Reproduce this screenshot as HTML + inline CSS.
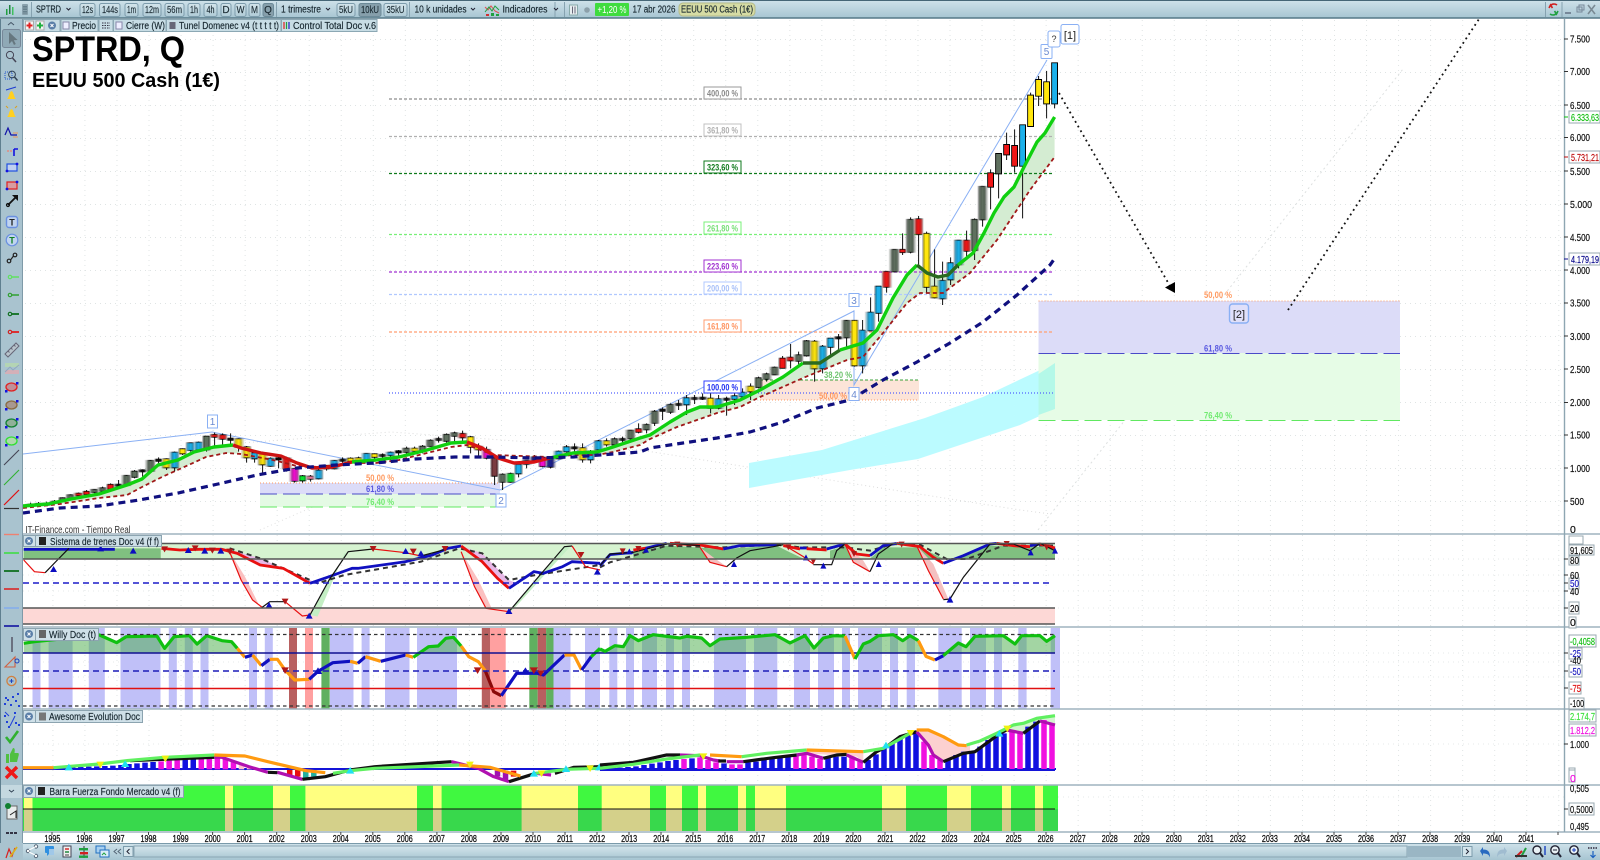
<!DOCTYPE html>
<html lang="es"><head><meta charset="utf-8"><title>SPTRD, Q</title>
<style>
html,body{margin:0;padding:0;background:#fff;width:1600px;height:860px;overflow:hidden}
svg{display:block;font-family:"Liberation Sans",Arial,sans-serif;filter:blur(.3px)}
path,polyline,line{vector-effect:non-scaling-stroke}
path:not(.f),polyline,line{fill:none}
path.f{stroke:none}
.a{font-size:10.5px;fill:#111;stroke:#111;stroke-width:.2}
.y{font-size:10.5px;fill:#111;stroke:#111;stroke-width:.3;text-anchor:middle}
.b{font-size:10px;fill:#1c2c34;stroke:#1c2c34;stroke-width:.15;text-anchor:middle}
.l{font-size:10px;fill:#15252d;stroke:#15252d;stroke-width:.15}
.p{font-size:9.5px;font-weight:bold;text-anchor:middle}
.w{font-size:10px;text-anchor:middle;fill:#6a8ad0}
.btn{fill:url(#bg);stroke:#7d9cac;stroke-width:1}
.tag{fill:#fff;stroke-width:1}
</style></head><body>
<svg width="1600" height="860" viewBox="0 0 1600 860" xmlns="http://www.w3.org/2000/svg">
<defs>
<linearGradient id="tb" x1="0" y1="0" x2="0" y2="1"><stop offset="0" stop-color="#cfe2ea"/><stop offset="1" stop-color="#a7c5d2"/></linearGradient>
<linearGradient id="bg" x1="0" y1="0" x2="0" y2="1"><stop offset="0" stop-color="#d4e5ec"/><stop offset="1" stop-color="#afcbd6"/></linearGradient>
<pattern id="gv" patternUnits="userSpaceOnUse" x="52.4" y="0" width="32.04" height="5"><rect width="1" height="1" fill="#dfe4e4"/></pattern>
<pattern id="gh" patternUnits="userSpaceOnUse" x="20" y="6" width="5" height="33"><rect width="1" height="1" fill="#dfe4e4"/></pattern>
<filter id="o" filterUnits="userSpaceOnUse" x="0" y="0" width="1600" height="860"><feMorphology in="SourceAlpha" operator="dilate" radius="0.9" result="d"/><feMerge><feMergeNode in="d"/><feMergeNode in="SourceGraphic"/></feMerge></filter>
</defs>
<rect width="1600" height="860" fill="#fff"/>
<!-- grid -->
<rect x="23" y="19" width="1541" height="813" fill="url(#gv)"/>
<rect x="23" y="19" width="1541" height="515" fill="url(#gh)"/>
<path d="M23 559H1564M23 575H1564M23 591H1564M23 608H1564M23 653H1564M23 662H1564M23 677H1564M23 744H1564M23 797H1564" stroke="#e4e8e8" stroke-width="1" stroke-dasharray="1 4"/>

<!-- faint lines -->
<path d="M1038 530L1403 69" stroke="#dde0e0" stroke-width="1" stroke-dasharray="2 3"/>
<path d="M241 443L391 432L640 450L1020 510L1051 514" stroke="#dcdcdc" stroke-width="1" stroke-dasharray="1 3"/>
<path d="M260 530L340 495" stroke="#e0e0e0" stroke-width="1" stroke-dasharray="1 3"/>

<!-- retracement zones -->
<rect x="760" y="380" width="159" height="20" fill="#fce4d8"/>
<rect x="260" y="483" width="240" height="11" fill="#dcdcf8"/>
<rect x="260" y="494" width="240" height="13" fill="#e4fae4"/>
<polygon points="749,463 822,450 925,418 983,397 1055,363 1055,409 1020,425 918,459 850,470 749,488" fill="#bbfbff"/>
<rect x="1038.5" y="301" width="361.5" height="52" fill="#dcdcf8"/>
<rect x="1038.5" y="353" width="361.5" height="67" fill="#e6fce6"/>
<polygon points="1038.5,374 1055,363 1055,409 1038.5,415" fill="#b4f8e8"/>
<path d="M1038.5 301H1400" stroke="#ff9a60" stroke-width="1" stroke-dasharray="1 2"/>
<path d="M1038.5 353.5H1400" stroke="#4a4ac8" stroke-width="1" stroke-dasharray="17 6"/>
<path d="M1038.5 420.5H1400" stroke="#60e860" stroke-width="1" stroke-dasharray="17 6"/>
<path d="M260 483H500" stroke="#ff9a60" stroke-width="1" stroke-dasharray="1 2"/>
<path d="M260 494H500" stroke="#4a4ac8" stroke-width="1" stroke-dasharray="17 6"/>
<path d="M260 507H500" stroke="#60e860" stroke-width="1" stroke-dasharray="17 6"/>
<path d="M760 380H919" stroke="#38a038" stroke-width="1" stroke-dasharray="3 2"/>
<path d="M760 400H919" stroke="#ff9a60" stroke-width="1" stroke-dasharray="1 2"/>

<!-- green cloud -->
<g fill="#d4ecd2">
<polygon points="23,506 48,504 71,499 99,494 127,485 142,479 158,465 178,460 194,452 214,447 233,445 241,454 226,453 206,457 182,468 162,477 142,487 127,495 99,498 60,504 23,508"/>
<polygon points="550,458 573,453 597,452 613,447 640,438 650,435 670,422 687,412 700,407 717,407 740,400 760,390 783,377 803,363 820,363 840,350 853,346 863,343 877,330 893,298 907,275 917,265 927,273 938,277 948,275 958,265 973,253 984,233 994,213 1004,197 1014,187 1024,167 1037,142 1045,133 1054.6,117 1054.6,157 1030,190 997,240 970,273 943,293 920,293 907,303 883,333 863,357 847,360 803,378 760,397 740,407 717,413 677,427 650,439 640,445 613,452 597,455 573,455 550,457"/>
</g>

<!-- fib lines -->
<g stroke-width="1.2">
<path d="M389 99H1054" stroke="#8c8c8c" stroke-dasharray="3 2"/>
<path d="M389 136.5H1054" stroke="#b0b0b0" stroke-dasharray="3 2"/>
<path d="M389 173.5H1054" stroke="#0f7a1c" stroke-dasharray="3 2"/>
<path d="M389 234.5H1054" stroke="#78f078" stroke-dasharray="3 2"/>
<path d="M389 272H1054" stroke="#a030d0" stroke-dasharray="3 2"/>
<path d="M389 294.5H1054" stroke="#b0c8ff" stroke-dasharray="3 2"/>
<path d="M389 332H1054" stroke="#ff9e70" stroke-dasharray="3 2"/>
<path d="M389 393H1054" stroke="#5060ff" stroke-dasharray="1 2"/>
</g>

<!-- wave line -->
<polyline points="23,454 212,432 500,490 854,311 854,385 1047,60" stroke="#8ab0f4" stroke-width="1" fill="none"/>

<!-- candles -->
<g stroke-linecap="butt">
<g transform="translate(1054.6 0) scale(-8 .33333)"><path stroke="#111" stroke-width="1" d="M0 190V325M1 213V355M2 228V318M3 278V380M4 375V655M5 388V518M6 398V480M7 460V595M8 508V628"/></g>
<g transform="translate(1054.6 200) scale(-8 .33333)"><path stroke="#111" stroke-width="1" d="M9 -39V80M10 55V180M11 92V180M12 120V205M13 172V255M14 185V315M15 148V295M16 95V280M17 48V195M18 52V160M19 100V165M20 150V216M21 215V278M22 258V365M23 292V392M24 360V520M25 360V500M26 360V440M27 402V450M28 415V465M29 435V520M30 420V545M31 420V470M32 455V500M33 432V505M34 468V505M35 500V525M36 518V545M37 530V565M38 550V600M39 565V590M40 580V615M41 590V647M42 585V628M43 580V640M44 580V600M45 585V612M46 585V645M47 600V630M48 610V642M49 622V660M50 630V678"/></g>
<g transform="translate(1054.6 400) scale(-8 .33333)"><path stroke="#111" stroke-width="1" d="M51 70V100M52 70V100M53 90V118M54 110V135M55 112V140M56 115V140M57 120V150M58 150V190M59 130V188M60 130V155M61 135V158M62 152V178M63 170V205M64 170V202M65 165V190M66 180V205M67 192V232M68 218V248M69 220V270M70 172V255M71 140V178M72 130V175M73 108V160M74 92V130M75 95V125M76 100V128M77 110V128M78 118V140M79 135V160M80 140V160M81 140V165M82 150V175M83 155V180M84 160V180M85 160V178M86 160V185M87 170V190M88 172V190M89 172V188M90 180V208M91 195V212M92 205V238M93 225V245M94 225V248M95 205V248M96 170V215M97 165V205M98 172V200M99 155V218M100 155V188M101 138V188M102 115V155M103 100V135M104 100V140M105 98V140M106 108V155M107 125V152M108 128V155M109 145V165M110 155V215M111 175V210M112 172V195M113 180V218M114 208V232M115 210V235M116 225V258M117 240V262M118 250V270M119 260V275M120 268V280M121 270V285M122 278V288M123 283V298M124 292V306M125 300V312M126 305V318M127 306V318M128 308V320"/></g>
<g filter="url(#o)" stroke-width="4.8">
<g transform="translate(1054.6 0) scale(-8 .33333)">
<path stroke="#1cb0ea" d="M0 190V310M4 376V497"/>
<path stroke="#ffe60a" d="M1 247V310M2 240V287M3 287V378"/>
<path stroke="#f01818" d="M5 438V497M6 435V463M8 520V560"/>
<path stroke="#5f705f" d="M7 462V520"/>
</g>
<g transform="translate(1054.6 200) scale(-8 .33333)">
<path stroke="#5f705f" d="M9 -39V58M10 60V150M18 60V155M20 150V214M26 363V412M31 424V466M32 466V482M35 503V523M36 523V536M37 535V561M48 615V635M50 635V668"/>
<path stroke="#f01818" d="M11 122V152M17 58V102M19 150V156M21 216V260M33 473V481M34 476V503"/>
<path stroke="#1cb0ea" d="M12 122V193M13 190V238M14 243V295M22 260V338M23 338V391M24 392V496M28 416V440M29 440V505M39 578V589M40 589V596M42 598V623M46 595V613"/>
<path stroke="#ffe60a" d="M15 260V292M16 102V260M25 363V496M30 425V505M38 560V574M43 596V623"/>
<path stroke="#111" d="M27 412V415M41 596V599M44 593V596M45 594V597M47 612V615M49 629V632"/>
</g>
<g transform="translate(1054.6 400) scale(-8 .33333)">
<path stroke="#5f705f" d="M51 75V88M53 92V115M55 118V133M69 224V245M75 100V107M76 105V122M78 122V138M79 140V152M81 146V156M91 198V205M106 110V148M113 183V212M115 215V230M116 228V255M119 265V272M120 270V276M123 286V296M124 295V303"/>
<path stroke="#f01818" d="M52 88V95M74 102V112M96 175V205M104 106V116M105 105V110M118 255V266M121 276V282M122 281V286"/>
<path stroke="#ffe60a" d="M56 124V133M59 145V178M72 140V148M73 112V140M80 146V152M85 163V170M87 175V180M88 176V182M99 160V193M101 142V172M102 118V140M109 148V160M111 178V202"/>
<path stroke="#1cb0ea" d="M57 124V148M58 155V178M61 142V154M62 155V175M66 182V192M67 195V220M83 158V165M86 162V182M90 183V205M92 212V235M98 176V197M100 160V175M107 128V148M108 130V150M110 158V202"/>
<path stroke="#1e2090" d="M63 175V200M65 172V180"/>
<path stroke="#f010d0" d="M64 173V198M71 150V173M95 207V242"/>
<path stroke="#10e030" d="M68 222V245M94 229V241"/>
<path stroke="#7a3a40" d="M70 175V227"/>
<path stroke="#f080a0" d="M93 230V236"/>
<path stroke="#111" d="M54 117V120M60 142V145M77 117V120M82 154V157M84 165V168M89 179V182M97 175V178M103 116V119M112 179V182M114 211V214M117 254V257M125 305V308M126 311V314M127 312V315M128 314V317"/>
</g>
</g>
</g>

<!-- moving averages -->
<polyline points="23,508 60,504 99,498 127,495 142,487 162,477 182,468 206,457 226,453 241,454 257,457 273,460 297,466 320,467 348,463 376,463 399,460 427,453 451,447 467,445 494,455 550,457 573,455 597,455 613,452 640,445 650,439 677,427 717,413 740,407 760,397 803,378 847,360 863,357 883,333 907,303 920,293 943,293 970,273 997,240 1030,190 1054.6,157" fill="none" stroke="#a01818" stroke-width="1.8" stroke-dasharray="4 3"/>
<g fill="none" stroke-width="3.4" stroke-linejoin="round">
<polyline stroke="#10d010" points="23,506 48,504 71,499 99,494 127,485 142,479 158,465 178,460 194,452 214,447 233,445"/>
<polyline stroke="#cc1414" points="233,445 241,448 261,453 281,456 297,463 312,468 332,467 352,462"/>
<polyline stroke="#10d010" points="352,462 376,460 399,457 427,450 451,443 467,442"/>
<polyline stroke="#d81414" points="467,442 482,448 498,458 514,463 534,462 550,458"/>
<polyline stroke="#10d010" points="550,458 573,453 597,452 613,447 640,438 650,435 670,422 687,412 700,407 717,407 740,400 760,390 783,377 803,363"/>
<polyline stroke="#2a6a20" points="803,363 820,363 840,350"/>
<polyline stroke="#10d010" points="840,350 853,346 863,343 877,330 893,298 907,275 917,265"/>
<polyline stroke="#2a6a20" points="917,265 927,273 938,277 948,275 958,265"/>
<polyline stroke="#10d010" points="958,265 973,253 984,233 994,213 1004,197 1014,187 1024,167 1037,142 1045,133 1054.6,117"/>
</g>
<polyline points="23,513 60,508 99,506 139,500 178,493 218,484 257,475 297,468 336,465 376,463 415,459 455,457 494,457 534,458 573,457 640,452 650,448 683,443 717,438 750,432 783,422 817,408 850,400 883,380 917,362 950,343 983,322 1017,295 1050,265 1055,258" fill="none" stroke="#10107f" stroke-width="3.2" stroke-dasharray="7 5"/>

<!-- projections -->
<path d="M1059 93L1170 286" stroke="#111" stroke-width="1.8" stroke-dasharray="1.8 3.6"/>
<path class="f" fill="#000" d="M1165 287.5L1175 282V293Z"/>
<path d="M1288 310L1479 19" stroke="#111" stroke-width="1.8" stroke-dasharray="1.8 3.6"/>

<!-- retracement labels -->
<g><text class="p" x="1218" y="298" textLength="28" lengthAdjust="spacingAndGlyphs" fill="#ff9a60">50,00 %</text>
<text class="p" x="1218" y="351.5" textLength="28" lengthAdjust="spacingAndGlyphs" fill="#5a5ae0">61,80 %</text>
<text class="p" x="1218" y="418.5" textLength="28" lengthAdjust="spacingAndGlyphs" fill="#70ea70">76,40 %</text>
<text class="p" x="380" y="481" textLength="28" lengthAdjust="spacingAndGlyphs" fill="#ff9a60">50,00 %</text>
<text class="p" x="380" y="492" textLength="28" lengthAdjust="spacingAndGlyphs" fill="#5a5ae0">61,80 %</text>
<text class="p" x="380" y="505" textLength="28" lengthAdjust="spacingAndGlyphs" fill="#70ea70">76,40 %</text>
<text class="p" x="838" y="378" textLength="28" lengthAdjust="spacingAndGlyphs" fill="#70c470">38,20 %</text>
<text class="p" x="833" y="399" textLength="28" lengthAdjust="spacingAndGlyphs" fill="#ff9a60">50,00 %</text></g>

<!-- fib labels -->
<g>
<rect class="tag" x="704" y="87" width="37" height="12" stroke="#9a9a9a"/><text class="p" x="722.5" y="96.5" textLength="31" lengthAdjust="spacingAndGlyphs" fill="#8a8a8a">400,00 %</text>
<rect class="tag" x="704" y="124" width="37" height="12" stroke="#c0c0c0"/><text class="p" x="722.5" y="133.5" textLength="31" lengthAdjust="spacingAndGlyphs" fill="#b0b0b0">361,80 %</text>
<rect class="tag" x="704" y="161" width="37" height="12" stroke="#0f7a1c"/><text class="p" x="722.5" y="170.5" textLength="31" lengthAdjust="spacingAndGlyphs" fill="#0f7a1c">323,60 %</text>
<rect class="tag" x="704" y="222" width="37" height="12" stroke="#78f078"/><text class="p" x="722.5" y="231.5" textLength="31" lengthAdjust="spacingAndGlyphs" fill="#78e078">261,80 %</text>
<rect class="tag" x="704" y="260" width="37" height="12" stroke="#a030d0"/><text class="p" x="722.5" y="269.5" textLength="31" lengthAdjust="spacingAndGlyphs" fill="#a030d0">223,60 %</text>
<rect class="tag" x="704" y="282" width="37" height="12" stroke="#b0c8ff"/><text class="p" x="722.5" y="291.5" textLength="31" lengthAdjust="spacingAndGlyphs" fill="#a8c0f8">200,00 %</text>
<rect class="tag" x="704" y="320" width="37" height="12" stroke="#ff9e70"/><text class="p" x="722.5" y="329.5" textLength="31" lengthAdjust="spacingAndGlyphs" fill="#ff9460">161,80 %</text>
<rect class="tag" x="704" y="381" width="37" height="12" stroke="#3040ff"/><text class="p" x="722.5" y="390.5" textLength="31" lengthAdjust="spacingAndGlyphs" fill="#2030f0">100,00 %</text>
</g>

<!-- wave tags -->
<g stroke="#8ab0f4" fill="#fff" stroke-width="1">
<rect x="207.5" y="415" width="10" height="13"/><rect x="496" y="494" width="10" height="13"/><rect x="849" y="293.5" width="10" height="13"/><rect x="849" y="387.5" width="10" height="13"/><rect x="1041" y="44.5" width="11" height="14" rx="1"/><rect x="1048" y="31" width="12" height="16" rx="2"/><rect x="1061" y="24.5" width="18" height="19.5" rx="2"/><rect x="1229.5" y="304" width="19" height="19" rx="3" fill="#e0e0fa" stroke-width="1.4"/>
</g>
<text class="w" x="212.5" y="425">1</text><text class="w" x="501" y="504">2</text><text class="w" x="854" y="304">3</text><text class="w" x="854" y="398">4</text><text class="w" x="1046.5" y="55">5</text>
<text x="1054" y="42" font-size="9" text-anchor="middle" fill="#333">?</text>
<text x="1070" y="39" font-size="11" text-anchor="middle" fill="#222">[1]</text>
<text x="1239" y="318" font-size="11" text-anchor="middle" fill="#222">[2]</text>

<!-- titles -->
<text x="32" y="61" font-size="35" font-weight="bold" fill="#000" textLength="153" lengthAdjust="spacingAndGlyphs">SPTRD, Q</text>
<text x="32" y="87" font-size="20" font-weight="bold" fill="#000" textLength="188" lengthAdjust="spacingAndGlyphs">EEUU 500 Cash (1€)</text>
<text x="25.5" y="533" font-size="10" fill="#333" textLength="105" lengthAdjust="spacingAndGlyphs">IT-Finance.com - Tiempo Real</text>

<!-- PANEL Sistema -->
<rect x="23" y="543" width="1032" height="16" fill="#d6f3d0"/>
<rect x="23" y="608" width="1032" height="16" fill="#fdd8d6"/>
<g transform="translate(0 520) scale(.38268 .33333)">
<path class="f" fill="#80c080" d="M62 85H420V116H62Z"/>
<path class="f" fill="#e8b8e8" d="M610 92L680 115 740 145 830 190 810 190 740 145 680 135ZM1205 78L1260 100 1330 180 1350 190 1330 205 1300 175 1260 125Z"/>
<path class="f" fill="#fbc0c0" d="M600 95L640 170 680 262 690 262 660 240 630 180ZM1205 95L1240 200 1270 265 1285 265 1250 180Z"/>
<path class="f" fill="#c4eec4" d="M810 285L830 290 900 100 910 95 860 180ZM1330 275L1340 270 1490 80 1475 80 1400 180Z"/>
<polyline points="600,85 680,115 740,145 830,190 900,165 1000,145 1100,125 1200,85 1260,100 1330,180 1400,165 1568,135" fill="none" stroke="#333" stroke-width="2" stroke-dasharray="5 4"/>
<g fill="none" stroke-width="2.8" stroke-linejoin="round">
<polyline stroke="#e81010" points="422,85 470,90 520,88 580,88 620,100 680,135 740,145 810,190"/>
<polyline stroke="#1010c0" points="810,190 860,170 920,145 935,145 1060,125 1130,105 1170,85 1205,78"/>
<polyline stroke="#e81010" points="1205,78 1260,125 1300,175 1330,205"/>
<polyline stroke="#1010c0" points="1330,205 1395,155 1420,160 1470,140 1495,125 1568,130"/>
<polyline stroke="#1010c0" points="62,88 300,88"/>
</g>
<g fill="none" stroke-width="1.2">
<polyline stroke="#e81010" points="62,120 90,155 118,158"/>
<polyline stroke="#111" points="118,158 150,120 180,85"/>
<polyline stroke="#e81010" points="598,90 630,180 660,240 685,262"/>
<polyline stroke="#111" points="685,262 705,245 745,245"/>
<polyline stroke="#e81010" points="745,245 790,288 810,285"/>
<polyline stroke="#111" points="810,285 860,180 910,95 975,87"/>
<polyline stroke="#e81010" points="975,87 1060,98 1100,108"/>
<polyline stroke="#111" points="1100,108 1165,88"/>
<polyline stroke="#e81010" points="1205,95 1240,200 1270,265 1330,275"/>
<polyline stroke="#111" points="1330,275 1400,180 1475,80 1495,78"/>
<polyline stroke="#e81010" points="1495,78 1530,140 1568,150"/>
</g>
<path class="f" fill="#0c0cc0" d="M131 156l9-18 9 18zM254 94l9-18 9 18zM339 101l9-18 9 18zM483 99l9-18 9 18zM526 101l9-18 9 18zM568 101l9-18 9 18zM694 264l9-18 9 18zM799 296l9-18 9 18zM1051 102l9-18 9 18zM1091 109l9-18 9 18zM1321 282l9-18 9 18zM1552 164l9-18 9 18z"/>
<path class="f" fill="#b01818" d="M421 79h18l-9 18zM501 76h18l-9 18zM546 83h18l-9 18zM591 86h18l-9 18zM736 236h18l-9 18zM966 78h18l-9 18zM1071 86h18l-9 18zM1154 78h18l-9 18zM1509 96h18l-9 18z"/>
</g>
<g transform="translate(600 534) scale(.33333)">
<path class="f" fill="#80c080" d="M100 74V55L200 35 370 45 530 35 570 55 610 74ZM690 74V50L740 35 760 74ZM810 74L850 40 960 40 1030 74ZM1060 74L1170 35 1365 40V74Z"/>
<path class="f" fill="#f4c0c0" d="M300 40L330 85 380 98 340 70ZM735 30L760 85 810 113 790 80ZM950 35L985 110 1030 195 1045 195 1000 90Z"/>
<polyline points="0,100 30,85 100,65 200,35 370,40 530,32 600,40 735,40 810,50 880,30 960,32 1040,75 1100,75 1170,50 1210,35 1365,35" fill="none" stroke="#333" stroke-width="2" stroke-dasharray="5 4"/>
<g fill="none" stroke-width="2.8" stroke-linejoin="round">
<polyline stroke="#1010c0" points="0,95 30,62 100,55"/>
<polyline stroke="#e81010" points="100,48 140,42"/>
<polyline stroke="#1010c0" points="140,42 200,28"/>
<polyline stroke="#e81010" points="210,28 300,33 370,45"/>
<polyline stroke="#1010c0" points="370,45 420,35 530,32"/>
<polyline stroke="#e81010" points="550,35 600,45"/>
<polyline stroke="#1010c0" points="600,42 620,42"/>
<polyline stroke="#e81010" points="620,44 680,48"/>
<polyline stroke="#1010c0" points="680,45 735,30"/>
<polyline stroke="#e81010" points="735,30 770,60 810,65"/>
<polyline stroke="#1010c0" points="810,65 850,35 890,28"/>
<polyline stroke="#e81010" points="890,28 960,38 1000,70 1030,88"/>
<polyline stroke="#1010c0" points="1030,88 1090,65 1170,30 1190,28"/>
<polyline stroke="#e81010" points="1190,28 1240,35 1290,38"/>
<polyline stroke="#1010c0" points="1290,35 1320,30"/>
<polyline stroke="#e81010" points="1320,30 1365,42"/>
</g>
<g fill="none" stroke-width="1.2">
<polyline stroke="#111" points="0,95 30,60 100,55 200,30 240,30 300,35"/>
<polyline stroke="#e81010" points="300,40 330,85 380,98"/>
<polyline stroke="#111" points="380,98 410,72 450,50 520,38 550,32"/>
<polyline stroke="#e81010" points="550,32 610,68 640,90"/>
<polyline stroke="#111" points="640,92 695,92 710,50 735,30"/>
<polyline stroke="#e81010" points="735,30 760,85 810,113"/>
<polyline stroke="#111" points="810,113 835,60 880,28"/>
<polyline stroke="#e81010" points="950,35 985,110 1030,195"/>
<polyline stroke="#111" points="1030,197 1050,195 1090,130 1170,30 1240,30 1290,50 1320,28 1365,50"/>
</g>
<path class="f" fill="#0c0cc0" d="M79 61l9-18 9 18zM129 56l9-18 9 18zM393 99l9-18 9 18zM609 79l9-18 9 18zM661 104l9-18 9 18zM827 99l9-18 9 18zM1040 206l10-20 10 20zM1283 64l9-18 9 18zM1356 59l9-18 9 18z"/>
<path class="f" fill="#b01818" d="M59 43h18l-9 18zM106 36h18l-9 18zM223 23h18l-9 18zM896 23h18l-9 18zM1211 21h18l-9 18zM556 31h18l-9 18zM631 73h18l-9 18zM753 51h18l-9 18zM1331 31h18l-9 18z"/>
</g>
<path d="M23 543.5H1055M23 559H1055M23 608H1055M23 624H1055" stroke="#555" stroke-width="1.4"/>
<path d="M23 583H1052" stroke="#1c1cc8" stroke-width="1.5" stroke-dasharray="6 4"/>

<!-- PANEL Willy -->
<g fill="#c0c0f8">
<rect x="32.5" y="628" width="8" height="81"/><rect x="48.6" y="628" width="24" height="81"/><rect x="88.8" y="628" width="16" height="81"/><rect x="120.5" y="628" width="40" height="81"/><rect x="168.8" y="628" width="8" height="81"/><rect x="184.8" y="628" width="8" height="81"/><rect x="200.5" y="628" width="8" height="81"/><rect x="249" y="628" width="8" height="81"/><rect x="264.8" y="628" width="8" height="81"/><rect x="330" y="628" width="23.5" height="81"/><rect x="361.6" y="628" width="8" height="81"/><rect x="385" y="628" width="24.5" height="81"/><rect x="417" y="628" width="40" height="81"/><rect x="553.5" y="628" width="17" height="81"/><rect x="585" y="628" width="15" height="81"/>
<rect x="609.3" y="628" width="8" height="81"/><rect x="626" y="628" width="8" height="81"/><rect x="642" y="628" width="15" height="81"/><rect x="666" y="628" width="8" height="81"/><rect x="682" y="628" width="8" height="81"/><rect x="714" y="628" width="32" height="81"/><rect x="754" y="628" width="23.3" height="81"/><rect x="794" y="628" width="16" height="81"/><rect x="818" y="628" width="16" height="81"/><rect x="842" y="628" width="8" height="81"/><rect x="858" y="628" width="24" height="81"/><rect x="890" y="628" width="8" height="81"/><rect x="906.7" y="628" width="8.3" height="81"/><rect x="938.3" y="628" width="23.4" height="81"/><rect x="970" y="628" width="16" height="81"/><rect x="994" y="628" width="8" height="81"/><rect x="1018.3" y="628" width="8.3" height="81"/><rect x="1050.7" y="628" width="9.3" height="81"/>
</g>
<rect x="289" y="628" width="8" height="81" fill="#b86060"/><rect x="305" y="628" width="8" height="81" fill="#ffa0a0"/><rect x="321.4" y="628" width="8.3" height="81" fill="#60b060"/>
<rect x="481.8" y="628" width="8.2" height="81" fill="#b86060"/><rect x="490" y="628" width="15.7" height="81" fill="#ffa0a0"/><rect x="529.3" y="628" width="8.4" height="81" fill="#60b060"/><rect x="537.7" y="628" width="8.4" height="81" fill="#b86060"/><rect x="546.1" y="628" width="7.4" height="81" fill="#60b060"/>
<g transform="translate(0 520) scale(.38268 .33333)">
<path class="f" fill="#48ac48" fill-opacity=".5" d="M62 370L90 365 260 345 305 368 330 350 410 348 430 385 455 350 495 347 515 372 540 347 580 362 605 365 620 385 632 400H62ZM1085 400L1120 380 1145 378 1165 355 1185 352 1205 378 1220 400ZM1545 410L1568 385V400H1555Z"/>
<g fill="none" stroke-width="3.2" stroke-linejoin="round">
<polyline stroke="#10c010" points="62,370 90,365 260,345 305,368 330,350 410,348 430,385 455,350 495,347 515,372 540,347 580,362 605,365 620,385"/>
<polyline stroke="#ff9a10" points="620,385 640,412"/>
<polyline stroke="#1010c0" points="640,412 660,405"/>
<polyline stroke="#ff9a10" points="660,405 683,437"/>
<polyline stroke="#1010c0" points="683,437 705,418"/>
<polyline stroke="#ff9a10" points="705,418 725,418 745,450 770,480 808,478"/>
<polyline stroke="#1010c0" points="808,478 830,455 870,428 915,424"/>
<polyline stroke="#ff9a10" points="915,424 935,430"/>
<polyline stroke="#1010c0" points="935,430 955,410"/>
<polyline stroke="#ff9a10" points="955,410 995,424"/>
<polyline stroke="#1010c0" points="995,424 1060,405"/>
<polyline stroke="#ff9a10" points="1060,405 1080,412"/>
<polyline stroke="#10c010" points="1080,412 1120,380 1145,378 1165,355 1185,352 1205,378"/>
<polyline stroke="#ff9a10" points="1205,378 1225,410 1250,425 1268,452"/>
<polyline stroke="#8a0a0a" points="1268,452 1290,515 1310,527"/>
<polyline stroke="#1010c0" points="1310,527 1350,460 1405,460 1420,465 1475,405"/>
<polyline stroke="#ff9a10" points="1475,405 1500,405 1520,450"/>
<polyline stroke="#1010c0" points="1520,450 1545,410"/>
<polyline stroke="#10c010" points="1545,410 1568,385"/>
</g>
</g>
<g transform="translate(600 534) scale(.33333)">
<path class="f" fill="#48ac48" fill-opacity=".5" d="M0 345L15 352 45 335 70 338 90 305 115 320 160 302 240 312 260 307 305 312 330 335 360 315 440 310 525 302 570 327 615 305 642 342 670 312 700 305 735 306 755 357H0ZM772 357L790 330 810 322 835 305 880 302 908 320 930 305 955 320 972 357ZM1040 357L1075 327 1098 338 1125 307 1210 305 1245 330 1265 305 1320 305 1340 322 1365 305V357Z"/>
</g>
<path d="M23 634.5H1055M23 706H1055" stroke="#333" stroke-width="1.2" stroke-dasharray="3.5 3"/>
<path d="M23 653H1055" stroke="#101090" stroke-width="1.5"/>
<path d="M23 671H1055" stroke="#1c1cb8" stroke-width="1.5" stroke-dasharray="6 4"/>
<path d="M23 688.5H1055" stroke="#e01010" stroke-width="1.4"/>
<g transform="translate(600 534) scale(.33333)"><g fill="none" stroke-width="3.2" stroke-linejoin="round">
<polyline stroke="#10c010" points="0,345 15,352 45,335 70,338 90,305 115,320 160,302 240,312 260,307 305,312 330,335 360,315 440,310 525,302 570,327 615,305 642,342 670,312 700,305 735,306"/>
<polyline stroke="#ff9a10" points="735,306 765,375"/>
<polyline stroke="#10c010" points="765,375 790,330 810,322 835,305 880,302 908,320 930,305 955,320"/>
<polyline stroke="#ff9a10" points="955,320 978,367 1005,378"/>
<polyline stroke="#1010c0" points="1005,378 1030,365"/>
<polyline stroke="#10c010" points="1030,365 1075,327 1098,338 1125,307 1210,305 1245,330 1265,305 1320,305 1340,322 1365,305"/>
</g></g>
<g transform="translate(0 520) scale(.38268 .33333)">
<path class="f" fill="#1010c0" d="M820 462l11-20 11 20zM1362 462l11-20 11 20z"/>
<path class="f" fill="#b01818" d="M735 442h20l-10 20zM1238 442h20l-10 20zM1384 442h22l-11 20zM1404 452h18l-9 18z"/>
</g>

<!-- PANEL Awesome -->
<path d="M23 769H1056" stroke="#1414d8" stroke-width="2"/>
<g transform="translate(0 520) scale(.38268 .33333)">
<g stroke-width="5.5" fill="none">
<path stroke="#1010e0" d="M190 748V742M211 748V741M232 748V740M253 748V739M274 748V738M295 748V737M316 748V735M337 748V732M358 748V730M379 748V728M400 748V726M484 748V718M505 748V716"/>
<path stroke="#f010e0" d="M421 748V724M442 748V722M463 748V720M526 748V716M547 748V714M568 748V712M589 748V714M610 748V722"/>
<path stroke="#ffc0d0" d="M631 748V730M652 748V738M673 748V744"/>
<path stroke="#e81010" d="M757 750V765M778 750V770"/>
<path stroke="#20b0a0" d="M799 750V775M820 750V770"/>
<path stroke="#a010b0" d="M1300 752V770M1321 752V780"/>
<path stroke="#e81010" d="M1342 752V770"/>
</g>
<g fill="none" stroke-width="3.2" stroke-linejoin="round">
<polyline stroke="#ff9a10" points="60,743 140,743"/>
<polyline stroke="#111" points="340,722 560,712"/>
<polyline stroke="#b010b0" points="560,712 580,712 650,740 700,757"/>
<polyline stroke="#111" points="700,757 725,758"/>
<polyline stroke="#b010b0" points="725,757 790,778"/>
<polyline stroke="#111" points="790,778 850,770 915,750 980,740 1180,725"/>
<polyline stroke="#b010b0" points="1180,725 1250,745 1290,770 1330,785"/>
<polyline stroke="#111" points="1330,785 1400,760"/>
<polyline stroke="#b010b0" points="1400,760 1440,765"/>
<polyline stroke="#111" points="1450,760 1500,742 1568,740"/>
<polyline stroke="#60f060" points="140,743 260,732 330,722 430,712 560,705"/>
<polyline stroke="#ff9a10" points="560,705 640,708 700,725 800,752 850,758"/>
<polyline stroke="#60f060" points="870,760 915,752 980,745 1200,735"/>
<polyline stroke="#ff9a10" points="1200,735 1280,742 1360,768"/>
<polyline stroke="#60f060" points="1400,760 1480,748 1568,745"/>
</g>
<path class="f" fill="#20e0f0" d="M169 751l11-20 11 20zM316 741l11-20 11 20zM904 761l11-20 11 20zM1384 770l11-20 11 20zM1468 756l11-20 11 20zM1555 751l11-20 11 20z"/>
<path class="f" fill="#f0f010" d="M252 725h20l-10 20zM422 707h20l-10 20zM1218 725h20l-10 20zM1405 751h20l-10 20zM1532 736h20l-10 20z"/>
</g>
<g transform="translate(600 705) scale(.33333)">
<path class="f" fill="#fcd0d0" d="M620 135L790 140 790 170 770 155 620 145ZM960 75L1000 80 1050 105 1080 122 1110 120 1110 140 1030 170 1000 150 960 85Z"/>
<path class="f" fill="#d4f4d0" d="M1240 60L1270 55 1310 40 1365 32V60L1320 48 1270 85 1220 75Z"/>
<g stroke-width="5.5" fill="none">
<path stroke="#1010e0" d="M12 195V192M36 195V190M60 195V188M84 195V186M108 195V184M132 195V180M156 195V176M180 195V172M204 195V168M228 195V165M276 195V160M372 195V175M444 195V172M468 195V170M492 195V165M516 195V162M540 195V158M564 195V153M684 195V158M708 195V155M732 195V155M804 195V165M828 195V148M852 195V130M876 195V115M900 195V100M924 195V90M948 195V85M1044 195V165M1068 195V150M1092 195V140M1116 195V140M1140 195V125M1164 195V105M1188 195V90M1212 195V85M1284 195V65M1308 195V50"/>
<path stroke="#f010e0" d="M252 195V162M300 195V158M324 195V165M348 195V172M396 195V178M420 195V178M588 195V152M612 195V150M636 195V155M660 195V162M756 195V158M780 195V170M972 195V110M996 195V150M1020 195V165M1236 195V75M1260 195V85M1332 195V45M1356 195V55"/>
</g>
<path d="M0 195H1365" stroke="#1414d8" stroke-width="2"/>
<g fill="none" stroke-width="3.2" stroke-linejoin="round">
<polyline stroke="#111" points="0,180 100,172 200,150 240,150"/>
<polyline stroke="#b010b0" points="240,150 300,152 340,165 360,168"/>
<polyline stroke="#111" points="355,168 378,168"/>
<polyline stroke="#b010b0" points="380,170 430,170"/>
<polyline stroke="#111" points="430,170 520,158 590,150"/>
<polyline stroke="#b010b0" points="590,150 620,145 670,160"/>
<polyline stroke="#111" points="670,160 710,150 740,148"/>
<polyline stroke="#b010b0" points="740,150 790,172"/>
<polyline stroke="#111" points="790,172 830,140 860,125 900,95 950,80"/>
<polyline stroke="#b010b0" points="950,80 985,120 1000,150 1030,170"/>
<polyline stroke="#111" points="1030,170 1090,145 1125,140 1200,85 1220,75"/>
<polyline stroke="#b010b0" points="1220,75 1270,85"/>
<polyline stroke="#111" points="1270,85 1320,48"/>
<polyline stroke="#b010b0" points="1320,48 1365,60"/>
<polyline stroke="#60f060" points="0,190 100,178 200,162 300,150"/>
<polyline stroke="#ff9a10" points="330,150 425,155"/>
<polyline stroke="#60f060" points="425,155 500,145 620,135"/>
<polyline stroke="#ff9a10" points="620,135 790,140"/>
<polyline stroke="#60f060" points="790,140 850,130 930,85"/>
<polyline stroke="#ff9a10" points="950,75 985,75 1030,95 1075,120 1100,122"/>
<polyline stroke="#60f060" points="1100,120 1140,108 1190,85 1240,60 1270,55 1310,40 1365,32"/>
</g>
<path class="f" fill="#f0f010" d="M298 145h24l-12 20zM920 75h24l-12 20zM1210 62h24l-12 20z"/>
<path class="f" fill="#20e0f0" d="M846 130l12-20 12 20zM1186 95l12-20 12 20z"/>
</g>

<!-- PANEL Barra -->
<rect x="23" y="785" width="1035" height="24" fill="#40f840"/>
<rect x="23" y="809" width="1035" height="22" fill="#38d84c"/>
<g fill="#ffff80"><rect x="24" y="785" width="8.5" height="24"/><rect x="225" y="785" width="8" height="24"/><rect x="273" y="785" width="17" height="24"/><rect x="305.4" y="785" width="111.6" height="24"/><rect x="433" y="785" width="8.6" height="24"/><rect x="521.6" y="785" width="56.4" height="24"/><rect x="601.7" y="785" width="48.3" height="24"/><rect x="666" y="785" width="16" height="24"/><rect x="698" y="785" width="8" height="24"/><rect x="738" y="785" width="8" height="24"/><rect x="755" y="785" width="31" height="24"/><rect x="882" y="785" width="24" height="24"/><rect x="947" y="785" width="24" height="24"/><rect x="1002" y="785" width="9" height="24"/><rect x="1035" y="785" width="8" height="24"/></g>
<g fill="#d4d08a"><rect x="24" y="809" width="8.5" height="22"/><rect x="225" y="809" width="8" height="22"/><rect x="273" y="809" width="17" height="22"/><rect x="305.4" y="809" width="111.6" height="22"/><rect x="433" y="809" width="8.6" height="22"/><rect x="521.6" y="809" width="56.4" height="22"/><rect x="601.7" y="809" width="48.3" height="22"/><rect x="666" y="809" width="16" height="22"/><rect x="698" y="809" width="8" height="22"/><rect x="738" y="809" width="8" height="22"/><rect x="755" y="809" width="31" height="22"/><rect x="882" y="809" width="24" height="22"/><rect x="947" y="809" width="24" height="22"/><rect x="1002" y="809" width="9" height="22"/><rect x="1035" y="809" width="8" height="22"/></g>
<path d="M23 809H1055" stroke="#111" stroke-width="1"/>

<!-- separators -->
<path d="M23 534H1600M23 627H1600M23 709H1600M23 785H1600M23 832H1600" stroke="#9fb4bf" stroke-width="1.6"/>
<path d="M1564.5 19V832" stroke="#8ea6b2" stroke-width="1.4"/>

<!-- axis ticks -->
<path d="M1564 39h4M1564 71.5h4M1564 105h4M1564 137.5h4M1564 171h4M1564 204h4M1564 237h4M1564 270h4M1564 303h4M1564 336h4M1564 369h4M1564 402.5h4M1564 435h4M1564 468h4M1564 501h4M1564 559h4M1564 575h4M1564 583h4M1564 591h4M1564 608h4M1564 653h4M1564 671h4M1564 688h4M1564 744h4M1564 809h4" stroke="#333" stroke-width="1"/>
<path d="M1564 117h4" stroke="#10c010"/><path d="M1564 157h4" stroke="#c01010"/><path d="M1564 259h4" stroke="#101090"/>
<!-- axis text -->
<text class="a" x="1570" y="42.5" textLength="20" lengthAdjust="spacingAndGlyphs">7.500</text>
<text class="a" x="1570" y="75" textLength="20" lengthAdjust="spacingAndGlyphs">7.000</text>
<text class="a" x="1570" y="109" textLength="20" lengthAdjust="spacingAndGlyphs">6.500</text>
<text class="a" x="1570" y="141" textLength="20" lengthAdjust="spacingAndGlyphs">6.000</text>
<text class="a" x="1570" y="175" textLength="20" lengthAdjust="spacingAndGlyphs">5.500</text>
<text class="a" x="1570" y="208" textLength="22" lengthAdjust="spacingAndGlyphs">5.000</text>
<text class="a" x="1570" y="241" textLength="20" lengthAdjust="spacingAndGlyphs">4.500</text>
<text class="a" x="1570" y="274" textLength="20" lengthAdjust="spacingAndGlyphs">4.000</text>
<text class="a" x="1570" y="306.5" textLength="20" lengthAdjust="spacingAndGlyphs">3.500</text>
<text class="a" x="1570" y="340" textLength="20" lengthAdjust="spacingAndGlyphs">3.000</text>
<text class="a" x="1570" y="373" textLength="20" lengthAdjust="spacingAndGlyphs">2.500</text>
<text class="a" x="1570" y="406" textLength="20" lengthAdjust="spacingAndGlyphs">2.000</text>
<text class="a" x="1570" y="438.5" textLength="20" lengthAdjust="spacingAndGlyphs">1.500</text>
<text class="a" x="1570" y="472" textLength="20" lengthAdjust="spacingAndGlyphs">1.000</text>
<text class="a" x="1570" y="505" textLength="14" lengthAdjust="spacingAndGlyphs">500</text>
<text class="a" x="1570" y="533">0</text>
<!-- boxed axis -->
<g fill="#fff" stroke="#98a8b0" stroke-width="1">
<rect x="1569" y="111" width="31" height="12"/><rect x="1569" y="151" width="31" height="12"/><rect x="1569" y="253" width="31" height="12"/>
<rect x="1569" y="536" width="14" height="8"/><rect x="1569" y="545" width="25" height="10"/><rect x="1569" y="556" width="10" height="9"/><rect x="1569" y="578" width="10" height="11"/><rect x="1569" y="602" width="10" height="12"/><rect x="1569" y="617" width="7" height="11"/>
<rect x="1569" y="635" width="27" height="12"/><rect x="1569" y="648" width="13" height="11"/><rect x="1569" y="665" width="13" height="12"/><rect x="1569" y="682" width="12" height="12"/><rect x="1569" y="698" width="15" height="11"/>
<rect x="1569" y="710" width="27" height="12"/><rect x="1569" y="724" width="27" height="12"/><rect x="1569" y="768" width="6" height="7"/><rect x="1569" y="770" width="6" height="12"/>
<rect x="1569" y="803" width="25" height="12"/>
</g>
<text class="a" x="1571" y="121" style="fill:#18c018;stroke:#18c018" textLength="28" lengthAdjust="spacingAndGlyphs">6.333,63</text>
<text class="a" x="1571" y="161" style="fill:#c01010;stroke:#c01010" textLength="28" lengthAdjust="spacingAndGlyphs">5.731,21</text>
<text class="a" x="1571" y="263" style="fill:#101090;stroke:#101090" textLength="28" lengthAdjust="spacingAndGlyphs">4.179,19</text>
<text class="a" x="1570" y="554" textLength="23" lengthAdjust="spacingAndGlyphs">91,605</text>
<text class="a" x="1570" y="564" textLength="9" lengthAdjust="spacingAndGlyphs">80</text>
<text class="a" x="1570" y="579" textLength="9" lengthAdjust="spacingAndGlyphs">60</text>
<text class="a" x="1570" y="595" textLength="9" lengthAdjust="spacingAndGlyphs">40</text>
<text class="a" x="1570" y="587" style="fill:#2020c0;stroke:#2020c0" textLength="9" lengthAdjust="spacingAndGlyphs">50</text>
<text class="a" x="1570" y="612" textLength="9" lengthAdjust="spacingAndGlyphs">20</text>
<text class="a" x="1570" y="626">0</text>
<text class="a" x="1570" y="645" style="fill:#18c018;stroke:#18c018" textLength="25" lengthAdjust="spacingAndGlyphs">-0,4058</text>
<text class="a" x="1570" y="657" style="fill:#2020c0;stroke:#2020c0" textLength="11" lengthAdjust="spacingAndGlyphs">-25</text>
<text class="a" x="1570" y="664" textLength="11" lengthAdjust="spacingAndGlyphs">-40</text>
<text class="a" x="1570" y="675" style="fill:#2020c0;stroke:#2020c0" textLength="11" lengthAdjust="spacingAndGlyphs">-50</text>
<text class="a" x="1570" y="692" style="fill:#e01010;stroke:#e01010" textLength="11" lengthAdjust="spacingAndGlyphs">-75</text>
<text class="a" x="1570" y="707" textLength="14" lengthAdjust="spacingAndGlyphs">-100</text>
<text class="a" x="1570" y="720" style="fill:#40e040;stroke:#40e040" textLength="25" lengthAdjust="spacingAndGlyphs">2.174,7</text>
<text class="a" x="1570" y="734" style="fill:#f010e0;stroke:#f010e0" textLength="25" lengthAdjust="spacingAndGlyphs">1.812,2</text>
<text class="a" x="1570" y="782" style="fill:#f010e0;stroke:#f010e0">0</text>
<text class="a" x="1570" y="748" textLength="19" lengthAdjust="spacingAndGlyphs">1.000</text>
<text class="a" x="1570" y="792" textLength="19" lengthAdjust="spacingAndGlyphs">0,505</text>
<text class="a" x="1570" y="813" textLength="23" lengthAdjust="spacingAndGlyphs">0,5000</text>
<text class="a" x="1570" y="830" textLength="19" lengthAdjust="spacingAndGlyphs">0,495</text>

<!-- year axis -->
<rect x="23" y="833" width="1577" height="10" fill="#fff"/>
<path d="M52 832v3M84.4 832v3M116.5 832v3M148.5 832v3M180.6 832v3M212.6 832v3M244.6 832v3M276.7 832v3M308.7 832v3M340.8 832v3M372.8 832v3M404.8 832v3M436.9 832v3M468.9 832v3M501 832v3M533 832v3M565 832v3M597 832v3M629 832v3M661 832v3M693 832v3M725 832v3M757 832v3M789 832v3M821 832v3M853 832v3M885 832v3M917 832v3M949 832v3M982 832v3M1014 832v3M1046 832v3M1078 832v3M1110 832v3M1142 832v3M1174 832v3M1206 832v3M1238 832v3M1270 832v3M1302 832v3M1334 832v3M1366 832v3M1398 832v3M1430 832v3M1462 832v3M1494 832v3M1526 832v3M1558 832v3" stroke="#444" stroke-width="1"/>
<g>
<text class="y" x="52.4" y="842" textLength="16" lengthAdjust="spacingAndGlyphs">1995</text><text class="y" x="84.4" y="842" textLength="16" lengthAdjust="spacingAndGlyphs">1996</text><text class="y" x="116.5" y="842" textLength="16" lengthAdjust="spacingAndGlyphs">1997</text><text class="y" x="148.5" y="842" textLength="16" lengthAdjust="spacingAndGlyphs">1998</text><text class="y" x="180.6" y="842" textLength="16" lengthAdjust="spacingAndGlyphs">1999</text><text class="y" x="212.6" y="842" textLength="16" lengthAdjust="spacingAndGlyphs">2000</text><text class="y" x="244.6" y="842" textLength="16" lengthAdjust="spacingAndGlyphs">2001</text><text class="y" x="276.7" y="842" textLength="16" lengthAdjust="spacingAndGlyphs">2002</text><text class="y" x="308.7" y="842" textLength="16" lengthAdjust="spacingAndGlyphs">2003</text><text class="y" x="340.8" y="842" textLength="16" lengthAdjust="spacingAndGlyphs">2004</text><text class="y" x="372.8" y="842" textLength="16" lengthAdjust="spacingAndGlyphs">2005</text><text class="y" x="404.8" y="842" textLength="16" lengthAdjust="spacingAndGlyphs">2006</text><text class="y" x="436.9" y="842" textLength="16" lengthAdjust="spacingAndGlyphs">2007</text><text class="y" x="468.9" y="842" textLength="16" lengthAdjust="spacingAndGlyphs">2008</text><text class="y" x="501" y="842" textLength="16" lengthAdjust="spacingAndGlyphs">2009</text><text class="y" x="533" y="842" textLength="16" lengthAdjust="spacingAndGlyphs">2010</text><text class="y" x="565" y="842" textLength="16" lengthAdjust="spacingAndGlyphs">2011</text><text class="y" x="597.1" y="842" textLength="16" lengthAdjust="spacingAndGlyphs">2012</text><text class="y" x="629.1" y="842" textLength="16" lengthAdjust="spacingAndGlyphs">2013</text><text class="y" x="661.2" y="842" textLength="16" lengthAdjust="spacingAndGlyphs">2014</text><text class="y" x="693.2" y="842" textLength="16" lengthAdjust="spacingAndGlyphs">2015</text><text class="y" x="725.2" y="842" textLength="16" lengthAdjust="spacingAndGlyphs">2016</text><text class="y" x="757.3" y="842" textLength="16" lengthAdjust="spacingAndGlyphs">2017</text><text class="y" x="789.3" y="842" textLength="16" lengthAdjust="spacingAndGlyphs">2018</text><text class="y" x="821.4" y="842" textLength="16" lengthAdjust="spacingAndGlyphs">2019</text><text class="y" x="853.4" y="842" textLength="16" lengthAdjust="spacingAndGlyphs">2020</text><text class="y" x="885.4" y="842" textLength="16" lengthAdjust="spacingAndGlyphs">2021</text><text class="y" x="917.5" y="842" textLength="16" lengthAdjust="spacingAndGlyphs">2022</text><text class="y" x="949.5" y="842" textLength="16" lengthAdjust="spacingAndGlyphs">2023</text><text class="y" x="981.6" y="842" textLength="16" lengthAdjust="spacingAndGlyphs">2024</text><text class="y" x="1013.6" y="842" textLength="16" lengthAdjust="spacingAndGlyphs">2025</text><text class="y" x="1045.6" y="842" textLength="16" lengthAdjust="spacingAndGlyphs">2026</text><text class="y" x="1077.7" y="842" textLength="16" lengthAdjust="spacingAndGlyphs">2027</text><text class="y" x="1109.7" y="842" textLength="16" lengthAdjust="spacingAndGlyphs">2028</text><text class="y" x="1141.8" y="842" textLength="16" lengthAdjust="spacingAndGlyphs">2029</text><text class="y" x="1173.8" y="842" textLength="16" lengthAdjust="spacingAndGlyphs">2030</text><text class="y" x="1205.8" y="842" textLength="16" lengthAdjust="spacingAndGlyphs">2031</text><text class="y" x="1237.9" y="842" textLength="16" lengthAdjust="spacingAndGlyphs">2032</text><text class="y" x="1269.9" y="842" textLength="16" lengthAdjust="spacingAndGlyphs">2033</text><text class="y" x="1302" y="842" textLength="16" lengthAdjust="spacingAndGlyphs">2034</text><text class="y" x="1334" y="842" textLength="16" lengthAdjust="spacingAndGlyphs">2035</text><text class="y" x="1366" y="842" textLength="16" lengthAdjust="spacingAndGlyphs">2036</text><text class="y" x="1398.1" y="842" textLength="16" lengthAdjust="spacingAndGlyphs">2037</text><text class="y" x="1430.1" y="842" textLength="16" lengthAdjust="spacingAndGlyphs">2038</text><text class="y" x="1462.2" y="842" textLength="16" lengthAdjust="spacingAndGlyphs">2039</text><text class="y" x="1494.2" y="842" textLength="16" lengthAdjust="spacingAndGlyphs">2040</text><text class="y" x="1526.2" y="842" textLength="16" lengthAdjust="spacingAndGlyphs">2041</text>
</g>

<!-- panel headers -->
<g fill="#cfe0e8" stroke="#8ca4b0" stroke-width="1">
<rect x="23.5" y="535.5" width="138" height="11"/><rect x="23.5" y="628.5" width="75" height="12"/><rect x="23.5" y="710.5" width="119" height="12"/><rect x="23.5" y="785.5" width="160" height="12"/>
</g>
<g><circle cx="29" cy="541" r="4" fill="#5b7fa8"/><circle cx="29" cy="634" r="4" fill="#5b7fa8"/><circle cx="29" cy="716.5" r="4" fill="#5b7fa8"/><circle cx="29" cy="791" r="4" fill="#5b7fa8"/>
<path d="M27.5 539.5l3 3m0-3l-3 3M27.5 632.5l3 3m0-3l-3 3M27.5 715l3 3m0-3l-3 3M27.5 789.5l3 3m0-3l-3 3" stroke="#fff" stroke-width="1"/></g>
<path d="M35.5 535.5v11M35.5 628.5v12M35.5 710.5v12M35.5 785.5v12" stroke="#8ca4b0"/>
<rect x="39" y="537" width="7" height="8" fill="#222"/><rect x="39" y="630" width="7" height="8" fill="#666"/><rect x="39" y="712.5" width="7" height="8" fill="#777"/><rect x="38" y="787" width="7" height="8" fill="#222"/>
<text class="l" x="50" y="545" textLength="109" lengthAdjust="spacingAndGlyphs">Sistema de trenes Doc v4 (f f)</text>
<text class="l" x="49" y="638" textLength="47" lengthAdjust="spacingAndGlyphs">Willy Doc (t)</text>
<text class="l" x="49" y="720" textLength="91" lengthAdjust="spacingAndGlyphs">Awesome Evolution Doc</text>
<text class="l" x="49.5" y="795" textLength="131" lengthAdjust="spacingAndGlyphs">Barra Fuerza Fondo Mercado v4 (f)</text>

<!-- top toolbar -->
<rect x="0" y="0" width="1600" height="18" fill="url(#tb)"/>
<path d="M0 .5H1600" stroke="#466676" stroke-width="1"/><path d="M0 18H1600" stroke="#567888" stroke-width="1.5"/>
<rect x="6" y="9" width="1.5" height="6" fill="#20a040"/><rect x="9" y="5" width="1.5" height="9" fill="#208040"/><rect x="12" y="7" width="1.5" height="8" fill="#40c060"/>
<rect x="22" y="4" width="6" height="11" rx="1" fill="#88a0ac"/><path d="M24 6v8M26 6v8" stroke="#45606e" stroke-dasharray="1.5 1"/>
<path d="M31.5 2V17M276.5 2V17M409.5 2V17M555 2V17M564.5 2V17" stroke="#86a2b0"/>
<text class="l" x="36" y="12.5" textLength="25" lengthAdjust="spacingAndGlyphs">SPTRD</text><path d="M66.5 8l2 2 2-2" stroke="#223" stroke-width="1"/>
<g>
<rect class="btn" x="80" y="3.5" width="15" height="13" rx="2"/><text class="b" x="87.5" y="13" textLength="11" lengthAdjust="spacingAndGlyphs">12s</text>
<rect class="btn" x="99.5" y="3.5" width="20.5" height="13" rx="2"/><text class="b" x="110" y="13" textLength="16" lengthAdjust="spacingAndGlyphs">144s</text>
<rect class="btn" x="125" y="3.5" width="13" height="13" rx="2"/><text class="b" x="131.5" y="13" textLength="9" lengthAdjust="spacingAndGlyphs">1m</text>
<rect class="btn" x="143" y="3.5" width="18" height="13" rx="2"/><text class="b" x="152" y="13" textLength="14" lengthAdjust="spacingAndGlyphs">12m</text>
<rect class="btn" x="165" y="3.5" width="19" height="13" rx="2"/><text class="b" x="174.5" y="13" textLength="15" lengthAdjust="spacingAndGlyphs">56m</text>
<rect class="btn" x="188" y="3.5" width="12" height="13" rx="2"/><text class="b" x="194" y="13" textLength="8" lengthAdjust="spacingAndGlyphs">1h</text>
<rect class="btn" x="204" y="3.5" width="13" height="13" rx="2"/><text class="b" x="210.5" y="13" textLength="8" lengthAdjust="spacingAndGlyphs">4h</text>
<rect class="btn" x="221" y="3.5" width="10" height="13" rx="2"/><text class="b" x="226" y="13">D</text>
<rect class="btn" x="235" y="3.5" width="11" height="13" rx="2"/><text class="b" x="240.5" y="13" textLength="8" lengthAdjust="spacingAndGlyphs">W</text>
<rect class="btn" x="249" y="3.5" width="11" height="13" rx="2"/><text class="b" x="254.5" y="13" textLength="7" lengthAdjust="spacingAndGlyphs">M</text>
<rect x="263" y="3.5" width="10.5" height="13" rx="2" fill="#869fab" stroke="#6c8a98"/><text class="b" x="268" y="13">Q</text>
</g>
<text class="l" x="281" y="12.5" textLength="40" lengthAdjust="spacingAndGlyphs">1 trimestre</text><path d="M326 8l2 2 2-2" stroke="#223"/>
<g>
<rect class="btn" x="337" y="3.5" width="18" height="13" rx="2"/><text class="b" x="346" y="13" textLength="14" lengthAdjust="spacingAndGlyphs">5kU</text>
<rect x="359" y="3.5" width="22" height="13" rx="2" fill="#869fab" stroke="#6c8a98"/><text class="b" x="370" y="13" textLength="18" lengthAdjust="spacingAndGlyphs">10kU</text>
<rect class="btn" x="384" y="3.5" width="23" height="13" rx="2"/><text class="b" x="395.5" y="13" textLength="18" lengthAdjust="spacingAndGlyphs">35kU</text>
</g>
<text class="l" x="414.5" y="12.5" textLength="52" lengthAdjust="spacingAndGlyphs">10 k unidades</text><path d="M471 8l2 2 2-2" stroke="#223"/>
<path d="M485 7l3 3 3-4 4 5 4 2" stroke="#e05050" stroke-width="1"/><path d="M485 12l4-5 3 4 3-5 4 4" stroke="#20a040" stroke-width="1"/><rect x="486" y="14" width="3" height="2" fill="#d03030"/><rect x="491" y="13" width="3" height="3" fill="#20a040"/><rect x="496" y="14" width="3" height="2" fill="#20a040"/>
<text class="l" x="502.5" y="12.5" textLength="45" lengthAdjust="spacingAndGlyphs">Indicadores</text><path d="M554 8l2 2 2-2" stroke="#223"/>
<rect x="569.5" y="5" width="8" height="10" fill="#e8eef0" stroke="#8aa"/><path d="M572.5 6.5v7M575 6.5v7" stroke="#667"/>
<circle cx="587" cy="10" r="2.8" fill="#8ca0aa"/>
<rect x="595" y="3" width="34" height="13" rx="1" fill="#3fdc3f"/><text x="612" y="13" font-size="10" text-anchor="middle" fill="#fff" textLength="29" lengthAdjust="spacingAndGlyphs">+1,20 %</text>
<text class="l" x="632.5" y="12.5" textLength="43" lengthAdjust="spacingAndGlyphs">17 abr 2026</text>
<rect x="679" y="3" width="76" height="13" rx="4" fill="#d6dca4" stroke="#b4ba88"/><text class="l" x="681" y="12.5" textLength="72" lengthAdjust="spacingAndGlyphs">EEUU 500 Cash (1€)</text>
<!-- top right controls -->
<path d="M1545.5 2V17M1562 2V17" stroke="#86a2b0"/>
<path d="M1550 6a5 5 0 0 1 7-1M1549 8l1.5-3 2 3" stroke="#d02020" stroke-width="1.6"/><path d="M1557 13a5 5 0 0 1-7 1M1558 11l-1.5 3-2-3" stroke="#20a040" stroke-width="1.6"/>
<path d="M1565 13h6" stroke="#789" stroke-width="2"/><rect x="1577" y="7" width="5" height="5" fill="none" stroke="#789"/><rect x="1579" y="5" width="5" height="5" fill="none" stroke="#789"/><path d="M1588 5l7 9m0-9l-7 9" stroke="#7a8a94" stroke-width="1.6"/>

<!-- legend row -->
<g fill="#c8dde5" stroke="#8ca8b4">
<rect x="23.5" y="19.5" width="36.5" height="12"/><rect x="61" y="19.5" width="37" height="12"/><rect x="99" y="19.5" width="14" height="12"/><rect x="113.5" y="19.5" width="52.5" height="12"/><rect x="166.5" y="19.5" width="114.5" height="12"/><rect x="281.5" y="19.5" width="95.5" height="12"/>
</g>
<rect x="25.5" y="21" width="8" height="9" fill="#f4f4f4" stroke="#aaa"/><path d="M29.5 22.5v6M26.5 25.5h6" stroke="#e02020" stroke-width="2"/>
<rect x="36" y="21" width="8" height="9" fill="#f4f4f4" stroke="#aaa"/><path d="M40 22.5v6M37 25.5h6" stroke="#20b040" stroke-width="2"/>
<circle cx="52" cy="25.5" r="4" fill="#5b7fa8"/><path d="M50.5 24l3 3m0-3l-3 3" stroke="#fff"/>
<rect x="63" y="22" width="6" height="7" fill="#eef" stroke="#88a"/><text class="l" x="72" y="29" textLength="24" lengthAdjust="spacingAndGlyphs">Precio</text>
<path d="M102 23h8M102 25.5h8M102 28h8" stroke="#334" stroke-dasharray="1.5 1"/>
<rect x="116" y="22" width="6" height="7" fill="#eef" stroke="#88a"/><text class="l" x="126" y="29" textLength="39" lengthAdjust="spacingAndGlyphs">Cierre (W)</text>
<rect x="169.5" y="22" width="6" height="7" fill="#667"/><text class="l" x="179" y="29" textLength="100" lengthAdjust="spacingAndGlyphs">Tunel Domenec v4 (t t t t t)</text>
<path d="M284 22v7" stroke="#e02020" stroke-width="1.2"/><path d="M286.5 22v7" stroke="#20a040" stroke-width="1.2"/><path d="M289 22v7" stroke="#2020c0" stroke-width="1.2"/><text class="l" x="293" y="29" textLength="83" lengthAdjust="spacingAndGlyphs">Control Total Doc v.6</text>

<!-- left toolbar -->
<rect x="0" y="19" width="23" height="824" fill="#a9c3cf"/>
<path d="M.5 19V843" stroke="#5f7f8f"/><path d="M22.5 19V843" stroke="#7f9aa8"/>
<path d="M8 25l3-2.5 3 2.5" stroke="#456" stroke-width="1"/>
<rect x="2.5" y="29.5" width="18" height="18" rx="2" fill="#8fa9b6" stroke="#789"/>
<path class="f" fill="#66777f" d="M9 32l0 12 3-3 2 4 1.8-1-2-3.8 3.8-.2Z"/>
<circle cx="10" cy="55" r="3.6" fill="none" stroke="#445"/><path d="M12.5 58l3.5 4" stroke="#445" stroke-width="1.5"/>
<rect x="5" y="72" width="7" height="7" fill="none" stroke="#2255cc" stroke-dasharray="1 1"/><circle cx="12" cy="74.5" r="3.4" fill="none" stroke="#345"/><path d="M14.5 77l3 3.5" stroke="#345" stroke-width="1.5"/>
<path class="f" fill="#ffd020" d="M7 99c2-1 2-7 4.5-8 2.5 1 2.5 7 4.5 8Z"/><path d="M6 90l10-3" stroke="#1c3ad0"/>
<path class="f" fill="#ffd020" d="M7 117c2-1 2-7 4.5-8 2.5 1 2.5 7 4.5 8Z"/><path d="M8 108l-2-2M15 108l2-2" stroke="#d8a020"/>
<g stroke-width="1.2">
<path d="M5 135l3-7 3 7h6" stroke="#1212a8"/><path d="M13 137h5M13 133h5" stroke="#e0a070"/>
<path d="M7 151h6" stroke="#ee8070" stroke-dasharray="2 1"/><path d="M14 149h4M14 149v7" stroke="#1212e0" stroke-width="1.6"/>
<rect x="7" y="164" width="10" height="7" fill="#c0d0f0" stroke="#2050e0"/><circle cx="7" cy="171" r="1.4" fill="#1212e0"/><circle cx="17" cy="164" r="1.4" fill="#1212e0"/>
<rect x="7" y="182" width="10" height="7" fill="#d89ca0" stroke="#e02020"/><circle cx="7" cy="189" r="1.4" fill="#1212e0"/><circle cx="17" cy="182" r="1.4" fill="#1212e0"/>
<path d="M8 205l9-9" stroke="#111" stroke-width="1.8"/><path class="f" fill="#111" d="M18 195l-6 0 6 6Z"/><circle cx="8" cy="205" r="1.5" fill="none" stroke="#111"/>
<rect x="6.5" y="216.5" width="11" height="11" rx="2.5" fill="#c0d4f0" stroke="#6a90e0" stroke-width="1.4"/><text x="12" y="225.5" font-size="9" font-weight="bold" text-anchor="middle" fill="#222">T</text>
<circle cx="12" cy="240" r="5.8" fill="#c0d4f0" stroke="#6a90e0"/><text x="12" y="243.5" font-size="9" font-weight="bold" text-anchor="middle" fill="#108020">T</text>
<circle cx="9" cy="261" r="1.8" fill="none" stroke="#222"/><circle cx="15" cy="255" r="1.8" fill="none" stroke="#222"/><path d="M10.5 260l3-4" stroke="#222"/>
<circle cx="10" cy="277" r="1.7" fill="none" stroke="#60e060"/><path d="M12 277h7" stroke="#60e060" stroke-width="1.5"/>
<circle cx="10" cy="295" r="1.7" fill="none" stroke="#30a030"/><path d="M12 295h7" stroke="#30a030" stroke-width="1.5"/>
<circle cx="10" cy="314" r="1.7" fill="none" stroke="#107020"/><path d="M12 314h7" stroke="#107020" stroke-width="1.8"/>
<circle cx="10" cy="332" r="1.7" fill="none" stroke="#d02020"/><path d="M12 332h7" stroke="#e02020" stroke-width="1.8"/>
</g>
<path d="M5 354l11-11 3 3-11 11Z" stroke="#667" style="fill:#b8c4cc"/><path d="M8 351l1.5 1.5M11 348l1.5 1.5M14 345l1.5 1.5" stroke="#667"/>
<rect x="5" y="363" width="14" height="4" fill="#b4d4b4"/><rect x="5" y="370" width="14" height="4" fill="#d4b0b8"/><path d="M5 372l5-5 3 3 6-5" stroke="#90a8c0"/>
<g>
<ellipse cx="11.5" cy="387" rx="5.5" ry="4" fill="#c09098" stroke="#e02020" stroke-width="1.3"/><ellipse cx="11.5" cy="405" rx="5.5" ry="4" fill="#a89890" stroke="#8a6a40" stroke-width="1.3"/><ellipse cx="11.5" cy="423" rx="5.5" ry="4" fill="#90b098" stroke="#108030" stroke-width="1.3"/><ellipse cx="11.5" cy="441" rx="5.5" ry="4" fill="#b0d8b0" stroke="#30e030" stroke-width="1.3"/>
<path class="f" fill="#1212e0" d="M5 390h2.5v2.5H5zM16 382h2.5v2.5H16zM5 408h2.5v2.5H5zM16 400h2.5v2.5H16zM5 426h2.5v2.5H5zM16 418h2.5v2.5H16zM5 444h2.5v2.5H5zM16 436h2.5v2.5H16z"/>
</g>
<path d="M4 465l15-15" stroke="#445" stroke-width="1.1"/><path d="M4 485l15-15" stroke="#30b030" stroke-width="1.1"/><path d="M4 505l15-15" stroke="#e01010" stroke-width="1.2"/>
<path d="M4 508.5h15" stroke="#333" stroke-width="1.2"/>
<path d="M4 534.5h15" stroke="#ee8070" stroke-width="1.4"/><path d="M4 553h15" stroke="#30e030" stroke-width="1.4"/><path d="M4 571h15" stroke="#107020" stroke-width="1.8"/><path d="M4 589h15" stroke="#e01010" stroke-width="1.4"/><path d="M4 608h15" stroke="#80aaf0" stroke-width="1.4"/><path d="M4 626h15" stroke="#1212a0" stroke-width="1.6"/>
<path d="M12 637v15" stroke="#556" stroke-width="1.5"/>
<path d="M5 667l10-10v10Z" stroke="#d06040" stroke-width="1.1"/><circle cx="17" cy="661" r="2" fill="none" stroke="#1a40c0"/>
<circle cx="11.5" cy="681" r="4.6" fill="none" stroke="#d08040" stroke-width="1.3"/><path d="M11.5 679v4M9.5 681h4" stroke="#1a40c0"/>
<g fill="#2040d8"><rect x="4" y="703" width="2" height="2"/><rect x="7" y="699" width="2" height="2"/><rect x="12" y="696" width="2" height="2"/><rect x="17" y="693" width="2" height="2"/><rect x="5" y="697" width="2" height="2"/><rect x="10" y="704" width="2" height="2"/><rect x="15" y="700" width="2" height="2"/><rect x="18" y="705" width="2" height="2"/><rect x="4" y="715" width="2" height="2"/><rect x="6" y="721" width="2" height="2"/><rect x="14" y="712" width="2" height="2"/><rect x="15" y="722" width="2" height="2"/><rect x="18" y="724" width="2" height="2"/><rect x="8" y="726" width="2" height="2"/></g><path d="M5 712l4 4M10 726l5-10" stroke="#2040d8"/>
<path d="M6 737l4 5 8-11" stroke="#30b030" stroke-width="2.6"/>
<path class="f" fill="#50c040" d="M6 754h3v9H6zM10 754l3-6c2 0 2 2 1.5 5h3.500c1 0 1 2 .5 3l-1.500 6H10Z"/>
<path d="M6 767l11 11m0-11l-11 11" stroke="#ee1818" stroke-width="3.4"/>
<rect x="1" y="785" width="21" height="13" fill="#c4d8e0"/><path d="M9 790l2.5 2 2.5-2" stroke="#345"/>
<rect x="7" y="806" width="10" height="13" fill="#e8ecec" stroke="#666"/><circle cx="8" cy="806" r="3" fill="#108030"/><path d="M10 815l6-4v7" stroke="#222"/>
<path d="M6 833h3M10 833h3M14 833h3" stroke="#334" stroke-width="2"/>

<!-- bottom bar -->
<rect x="0" y="843" width="1600" height="17" fill="url(#tb)"/>
<path d="M0 843.5H1600" stroke="#7a9aaa"/>
<rect x="0" y="843" width="23" height="17" fill="#a9c3cf"/>
<path d="M6 858l3-9 3 7 3-8" stroke="#d82020" stroke-width="1.2"/><path d="M10 857l7-10" stroke="#d8b020" stroke-width="1.8"/>
<circle cx="28" cy="851" r="1.7" fill="#fff" stroke="#567"/><circle cx="36" cy="846.5" r="1.7" fill="#fff" stroke="#567"/><circle cx="36" cy="856" r="1.7" fill="#fff" stroke="#567"/><path d="M29 850l6-3M29 852l6 3" stroke="#fff"/>
<rect x="45" y="846" width="9" height="7" rx="1" fill="#3090e0"/><path class="f" fill="#3090e0" d="M47 853v3l3-3Z"/><rect x="49" y="849" width="5" height="6" fill="#a0c8e8"/>
<rect x="63" y="846" width="8" height="11" fill="#f0f0f0" stroke="#445"/><path d="M65 849h4" stroke="#d02020" stroke-width="1.4"/><path d="M65 852h4" stroke="#108030" stroke-width="1.4"/><path d="M65 855h4" stroke="#444"/>
<path d="M84 846v12" stroke="#333"/><rect x="79" y="848" width="9" height="2.4" fill="#20a040"/><rect x="80" y="852" width="8" height="2.4" fill="#d02020"/><rect x="79" y="855.5" width="9" height="2.4" fill="#20a040"/>
<rect x="96" y="846" width="9" height="7" fill="#a8d0f0" stroke="#2070c0"/><rect x="100" y="850" width="9" height="7" fill="#d8ecf8" stroke="#2070c0"/><path d="M102 855l2-2 2 2" stroke="#20a040"/>
<path d="M117 849l-3 2.5 3 2.5M121 849l-3 2.5 3 2.5" stroke="#567"/>
<rect x="123.5" y="846.5" width="9.5" height="10" fill="#d4e5ec" stroke="#7d9cac"/><path d="M129.5 849l-2.5 2.5 2.5 2.5" stroke="#223"/>
<rect x="134" y="846" width="1273" height="11" fill="url(#bg)" stroke="#8aa6b4"/>
<rect x="1407" y="846" width="54" height="11" fill="#9ab6c4"/>
<rect x="1462.5" y="846.5" width="9.5" height="10" fill="#d4e5ec" stroke="#7d9cac"/><path d="M1466 849l2.5 2.5-2.5 2.5" stroke="#223"/>
<path d="M1480 851l3-4v2.5c5 0 7 2 7 8-1-3-3-4-7-4v2.5Z" style="fill:#2a6ac0"/>
<path d="M1507 851l-3-4v2.5c-5 0-7 2-7 8 1-3 3-4 7-4v2.5Z" style="fill:#a0bcd0"/>
<path d="M1516 857l6-6" stroke="#d02020" stroke-width="2"/><path d="M1521 857l5-9" stroke="#20a040" stroke-width="2"/><rect x="1515" y="855" width="12" height="2" style="fill:#333"/>
<circle cx="1537" cy="850" r="4" fill="#e8f0f4" stroke="#223" stroke-width="1.4"/><path d="M1540 853l3 4" stroke="#223" stroke-width="2"/><path d="M1545 846v9" stroke="#1a40c0" stroke-width="1.4"/>
<circle cx="1555" cy="850" r="4.2" fill="#e8f0f4" stroke="#223" stroke-width="1.4"/><path d="M1558 853l3 4" stroke="#223" stroke-width="2"/><path d="M1553 850h4" stroke="#223"/>
<circle cx="1574" cy="850" r="4.2" fill="#e8f0f4" stroke="#223" stroke-width="1.4"/><path d="M1577 853l3 4" stroke="#223" stroke-width="2"/><path d="M1572 850h4M1574 848v4" stroke="#1a40c0"/>
<path d="M1588 848h10" stroke="#556" stroke-width="2" stroke-dasharray="1.5 1"/><path d="M1593 851v6M1590.5 855l2.5 2.5 2.5-2.5" stroke="#1a60c0" stroke-width="1.2"/>
</svg>
</body></html>
